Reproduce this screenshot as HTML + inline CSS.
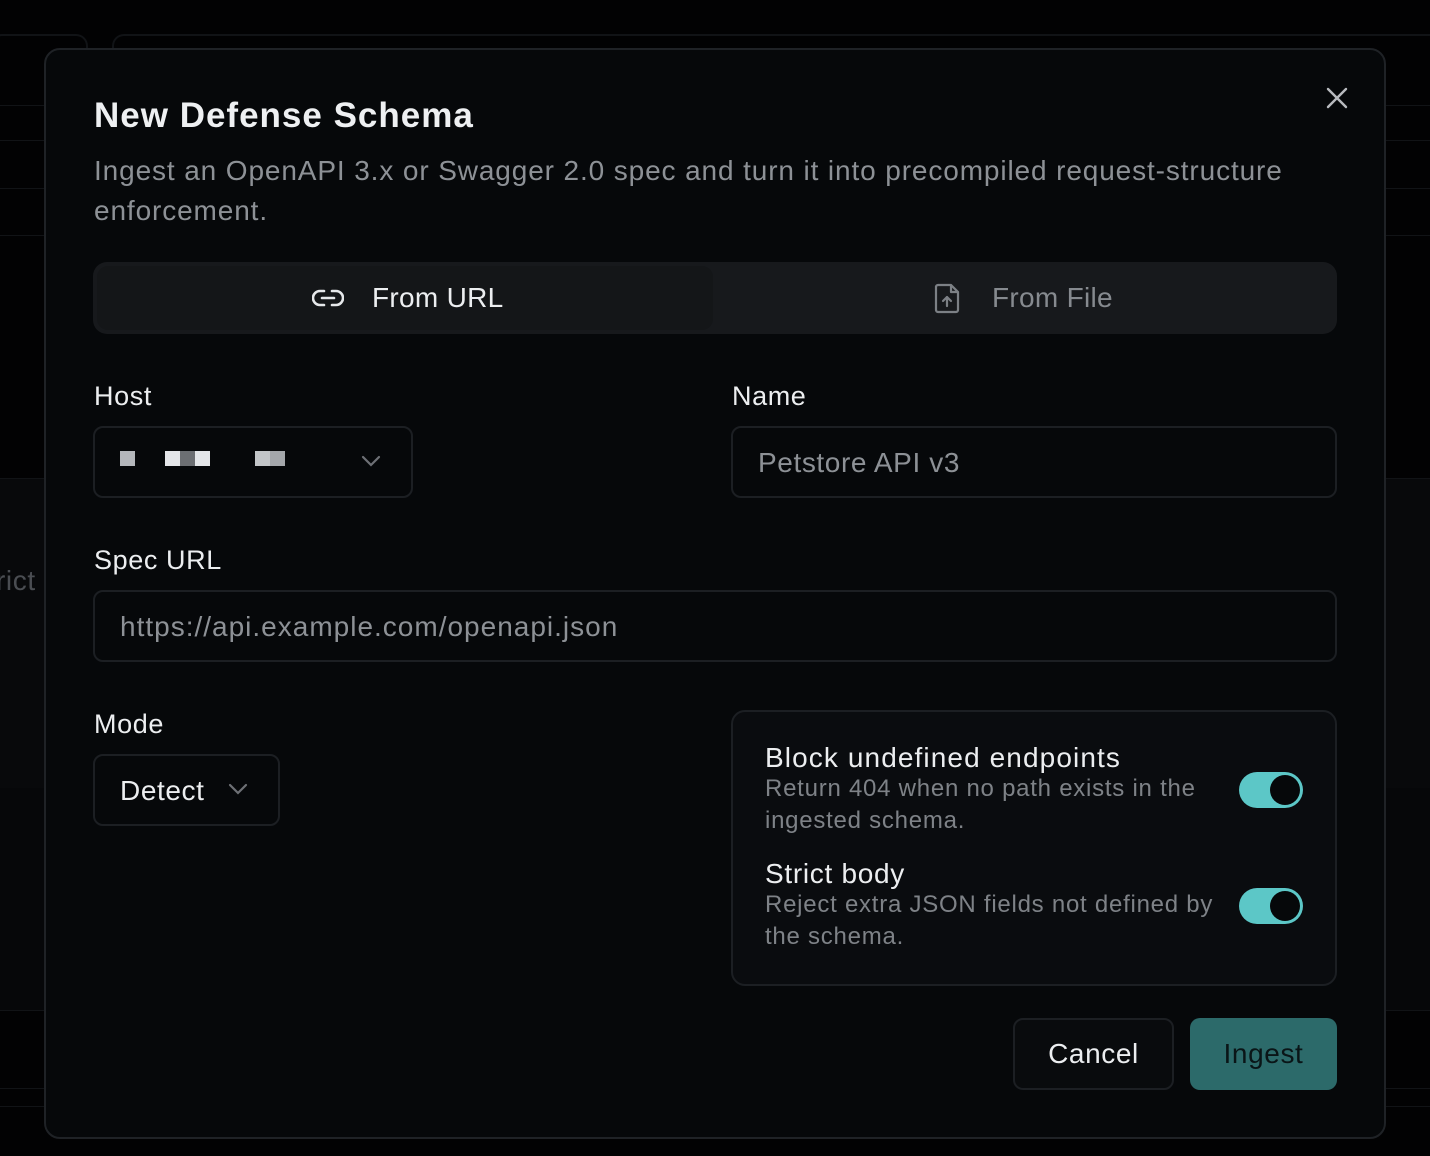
<!DOCTYPE html>
<html><head><meta charset="utf-8"><style>
*{box-sizing:border-box;margin:0;padding:0}
body{width:1430px;height:1156px;background:#020203;position:relative;overflow:hidden;font-family:"Liberation Sans",sans-serif;color:#e8eaed;letter-spacing:0.6px}
.a{position:absolute}
.bgl{position:absolute;left:0;width:1430px;height:1px;background:#111316}
.dlg{left:44px;top:48px;width:1342px;height:1091px;background:#06080a;border:2px solid #1f2226;border-radius:16px}
.lbl{font-size:27px;color:#eceef0}
.box{border:2px solid #1c1f23;border-radius:10px;background:#06080a}
.tog{width:64px;height:36px;border-radius:18px;background:#5cc7c7}
.tog::after{content:"";position:absolute;right:3px;top:3px;width:30px;height:30px;border-radius:50%;background:#06080a}
</style></head><body>
<div class="bgl" style="top:105px"></div>
<div class="bgl" style="top:140px"></div>
<div class="bgl" style="top:188px"></div>
<div class="bgl" style="top:235px"></div>
<div class="a" style="left:0;top:478px;width:1430px;height:310px;background:#08090b"></div>
<div class="bgl" style="top:478px"></div>
<div class="bgl" style="top:788px"></div>
<div class="a" style="left:0;top:788px;width:1430px;height:222px;background:#060709"></div>
<div class="bgl" style="top:1010px"></div>
<div class="bgl" style="top:1088px"></div>
<div class="bgl" style="top:1106px"></div>
<div class="a" style="left:112px;top:34px;width:1330px;height:14px;border:2px solid #111316;border-bottom:none;border-radius:12px 12px 0 0"></div>
<div class="a" style="left:-10px;top:34px;width:98px;height:14px;border:2px solid #111316;border-bottom:none;border-radius:12px 12px 0 0"></div>
<div class="a" style="left:-4px;top:565px;font-size:28px;color:#4a4d52">rict</div>

<div class="a dlg"></div>
<div class="a" style="left:94px;top:96px;font-size:35px;font-weight:bold;color:#eef0f2;letter-spacing:1px">New Defense Schema</div>
<div class="a" style="left:94px;top:151px;width:1240px;font-size:28px;line-height:40px;color:#8d9196;letter-spacing:0.88px">Ingest an OpenAPI 3.x or Swagger 2.0 spec and turn it into precompiled request-structure enforcement.</div>
<svg class="a" style="left:1324px;top:85px" width="26" height="26" viewBox="0 0 26 26"><path d="M4 4L22 22M22 4L4 22" stroke="#b8bbbf" stroke-width="2.4" stroke-linecap="round"/></svg>

<div class="a" style="left:93px;top:262px;width:1244px;height:72px;background:#17191c;border-radius:14px"></div>
<div class="a" style="left:97px;top:266px;width:616px;height:64px;background:#141618;border-radius:11px"></div>
<svg class="a" style="left:312px;top:286px" width="32" height="24" viewBox="0 0 32 24"><path d="M12 5H8a7 7 0 0 0 0 14h4M20 5h4a7 7 0 0 1 0 14h-4M10 12h12" fill="none" stroke="#e6e8ea" stroke-width="2.6" stroke-linecap="round"/></svg>
<div class="a" style="left:372px;top:282px;font-size:28px;color:#eceef0;letter-spacing:0.3px">From URL</div>
<svg class="a" style="left:934px;top:282px" width="28" height="32" viewBox="0 0 28 32"><path d="M4 3h13l7 7v18a2 2 0 0 1-2 2H4a2 2 0 0 1-2-2V5a2 2 0 0 1 2-2zM17 3v7h7M13 24v-9M9 19l4-4 4 4" fill="none" stroke="#7c8085" stroke-width="2.2" stroke-linejoin="round" stroke-linecap="round"/></svg>
<div class="a" style="left:992px;top:282px;font-size:28px;color:#868a8f;letter-spacing:0.3px">From File</div>

<div class="a lbl" style="left:94px;top:381px">Host</div>
<div class="a box" style="left:93px;top:426px;width:320px;height:72px"></div>
<div class="a" style="left:120px;top:451px;width:15px;height:15px;background:#b4b7bb"></div>
<div class="a" style="left:165px;top:451px;width:15px;height:15px;background:#e4e6e9"></div>
<div class="a" style="left:180px;top:451px;width:15px;height:15px;background:#6c6f73"></div>
<div class="a" style="left:195px;top:451px;width:15px;height:15px;background:#e4e6e9"></div>
<div class="a" style="left:255px;top:451px;width:15px;height:15px;background:#c2c5c8"></div>
<div class="a" style="left:270px;top:451px;width:15px;height:15px;background:#a4a7ab"></div>
<svg class="a" style="left:360px;top:454px" width="22" height="14" viewBox="0 0 22 14"><path d="M3 3l8 8 8-8" fill="none" stroke="#6d7075" stroke-width="2.2" stroke-linecap="round"/></svg>

<div class="a lbl" style="left:732px;top:381px">Name</div>
<div class="a box" style="left:731px;top:426px;width:606px;height:72px"></div>
<div class="a" style="left:758px;top:447px;font-size:28px;color:#8d9196">Petstore API v3</div>

<div class="a lbl" style="left:94px;top:545px">Spec URL</div>
<div class="a box" style="left:93px;top:590px;width:1244px;height:72px"></div>
<div class="a" style="left:120px;top:611px;font-size:28px;color:#8d9196;letter-spacing:1px">https://api.example.com/openapi.json</div>

<div class="a lbl" style="left:94px;top:709px">Mode</div>
<div class="a box" style="left:93px;top:754px;width:187px;height:72px"></div>
<div class="a" style="left:120px;top:775px;font-size:28px;color:#eceef0">Detect</div>
<svg class="a" style="left:227px;top:782px" width="22" height="14" viewBox="0 0 22 14"><path d="M3 3l8 8 8-8" fill="none" stroke="#6d7075" stroke-width="2.2" stroke-linecap="round"/></svg>

<div class="a" style="left:731px;top:710px;width:606px;height:276px;background:#0a0c0f;border:2px solid #1c1f23;border-radius:14px"></div>
<div class="a" style="left:765px;top:742px;font-size:28px;color:#eceef0;letter-spacing:1.1px">Block undefined endpoints</div>
<div class="a" style="left:765px;top:773px;width:460px;font-size:24px;line-height:32px;color:#7e8287;letter-spacing:0.75px">Return 404 when no path exists in the ingested schema.</div>
<div class="a tog" style="left:1239px;top:772px"></div>
<div class="a" style="left:765px;top:858px;font-size:28px;color:#eceef0;letter-spacing:0.7px">Strict body</div>
<div class="a" style="left:765px;top:889px;width:470px;font-size:24px;line-height:32px;color:#7e8287;letter-spacing:0.75px">Reject extra JSON fields not defined by the schema.</div>
<div class="a tog" style="left:1239px;top:888px"></div>

<div class="a" style="left:1013px;top:1018px;width:161px;height:72px;background:#090b0d;border:2px solid #1c1f23;border-radius:10px;font-size:28px;line-height:68px;text-align:center;color:#eceef0">Cancel</div>
<div class="a" style="left:1190px;top:1018px;width:147px;height:72px;background:#2c6a6a;border-radius:10px;font-size:28px;line-height:72px;text-align:center;color:#0a1517">Ingest</div>
</body></html>
